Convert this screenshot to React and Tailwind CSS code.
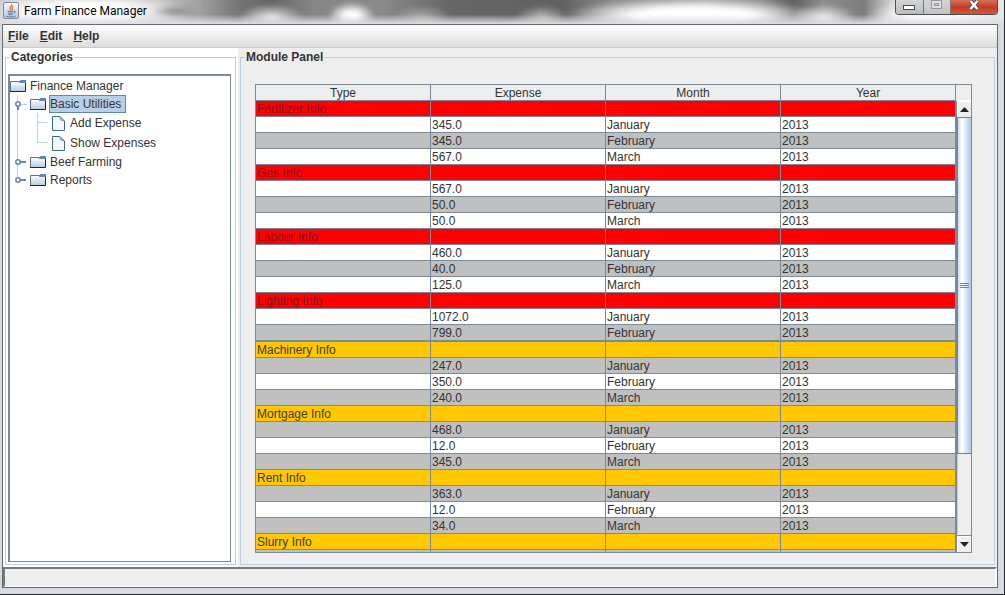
import React from "react";

const entries = [
  ["Fertilizer Info", "red", ["345.0", "345.0", "567.0"]],
  ["Gas Info", "red", ["567.0", "50.0", "50.0"]],
  ["Labour Info", "red", ["460.0", "40.0", "125.0"]],
  ["Lighting Info", "red", ["1072.0", "799.0"]],
  ["Machinery Info", "amber", ["247.0", "350.0", "240.0"]],
  ["Mortgage Info", "amber", ["468.0", "12.0", "345.0"]],
  ["Rent Info", "amber", ["363.0", "12.0", "34.0"]],
  ["Slurry Info", "amber", []],
];
const months = ["January", "February", "March"];

const rows = [];
entries.forEach(([name, tone, values]) => {
  rows.push({ type: name, tone, expense: "", month: "", year: "" });
  values.forEach((v, i) => rows.push({ type: "", expense: v, month: months[i], year: "2013" }));
});
rows.push({ type: "", expense: "", month: "", year: "" });

function rowClass(row, i) {
  if (row.tone === "red") return "bg-[#ff0000] text-[#801818]";
  if (row.tone === "amber") return "bg-[#ffc800] text-[#4a3a10]";
  return i % 2 === 0 ? "bg-[#c0c0c0]" : "bg-white";
}

function JavaIcon() {
  return (
    <svg width="16" height="17" viewBox="0 0 16 17" aria-hidden="true">
      <defs>
        <linearGradient id="java" x1="0" y1="0" x2="0" y2="1">
          <stop offset="0" stopColor="#fbfcfd" />
          <stop offset="1" stopColor="#b9c8d6" />
        </linearGradient>
      </defs>
      <rect x="0.5" y="0.5" width="15" height="16" rx="1.5" fill="url(#java)" stroke="#7b8a9a" />
      <path d="M8.500 2.300c1.400 1.600-2.600 2.600-1.500 4.200.4.6 1 1 .8 1.800M10.300 4.400c-1.700.8-1.600 1.600-.9 2.500.4.5.2 1-.2 1.400" fill="none" stroke="#e07a2c" strokeWidth="1.300" />
      <path d="M4.500 9.300h6.200M5 11h5M5.400 12.600h4.200M11 9.300c2-.6 2 1.600-.3 2M3.200 14.200c2.500 1 7 1 9.300-.1" fill="none" stroke="#55799e" />
    </svg>
  );
}

function Folder() {
  return (
    <svg className="shrink-0" width="17" height="14" viewBox="0 0 17 14" aria-hidden="true">
      <defs>
        <linearGradient id="folder" x1="0" y1="0" x2="0" y2="1">
          <stop offset="0" stopColor="#ffffff" />
          <stop offset="1" stopColor="#b3c9e0" />
        </linearGradient>
      </defs>
      <rect x="0.5" y="2.5" width="15" height="10" fill="url(#folder)" />
      <path d="M.5 12.500v-10h9l1.500 1" fill="none" stroke="#60728c" />
      <path d="M9 3.500 10.500 1H16v3H9z" fill="#6382bf" />
      <path d="M0 12.500h15.500V4" fill="none" stroke="#222831" />
    </svg>
  );
}

function Leaf() {
  return (
    <svg className="shrink-0" width="13" height="17" viewBox="0 0 13 17" aria-hidden="true">
      <path d="M.5 1.500h7.500l4.500 4.500v9.500H.5z" fill="#f4f8fc" stroke="#3f6793" />
      <path d="M7.500 1.500 8.500 5l3.500 1z" fill="#b8cfe5" stroke="#6489b0" strokeWidth="0.7" />
    </svg>
  );
}

function Branch({ kind }) {
  if (kind === "leaf" || kind === "lastLeaf") {
    return (
      <svg className="shrink-0" width="42" height="20" aria-hidden="true">
        <path d={kind === "leaf" ? "M7.5 0v20M27.5 0v20M28 9.5h9" : "M7.5 0v20M27.5 0v9.5h9.5"} fill="none" stroke="#b8cfe5" />
      </svg>
    );
  }
  return (
    <svg className="shrink-0" width="20" height="18" aria-hidden="true">
      <path d={kind === "last" ? "M7.5 0v9" : "M7.5 0v18"} stroke="#b8cfe5" />
      {kind === "open" ? (
        <>
          <path d="M11 9.5h6" stroke="#b8cfe5" />
          <path d="M8 10v5" stroke="#6382bf" strokeWidth="2" />
        </>
      ) : (
        <path d="M10 9h6" stroke="#6382bf" strokeWidth="2" />
      )}
      <circle cx="8" cy="9" r="2.2" fill="#fff" stroke="#6382bf" strokeWidth="1.5" />
    </svg>
  );
}

function TreeRow({ kind, label, selected }) {
  const leaf = kind === "leaf" || kind === "lastLeaf";
  return (
    <li className={leaf ? "flex h-5 items-center" : "flex h-[18px] items-center"}>
      {kind && <Branch kind={kind} />}
      {leaf ? <Leaf /> : <Folder />}
      <button
        className={
          selected
            ? "ml-0.5 h-[18px] border border-[#6382bf] bg-[#b8cfe5] pr-1 leading-4"
            : leaf
              ? "ml-1 border border-transparent leading-4"
              : "ml-0.5 border border-transparent leading-4"
        }
      >
        {label}
      </button>
    </li>
  );
}

function Panel({ title, className, children }) {
  return (
    <section className={className}>
      <fieldset className="flex min-h-0 min-w-0 flex-1 flex-col border border-[#b8cfe5]">
        <legend className="ml-1 px-px text-[12px] leading-4 font-bold">{title}</legend>
        {children}
      </fieldset>
    </section>
  );
}

function ArrowButton({ down }) {
  return (
    <button
      aria-label={down ? "Scroll down" : "Scroll up"}
      className="flex h-4 shrink-0 items-center justify-center border-t border-l border-white bg-[#eeeeee]"
    >
      <svg width="9" height="5" viewBox="0 0 9 5" aria-hidden="true">
        <path d={down ? "M0 0h9L5 4.5H4z" : "M0 5h9L5 .5H4z"} fill="#222" />
      </svg>
    </button>
  );
}

function TitleBar() {
  return (
    <header className="relative flex h-6 shrink-0 items-start overflow-hidden bg-[#c9cbcd]">
      <div className="absolute inset-0 bg-[linear-gradient(90deg,#c4c5c6_0%,#d5d5d5_4%,#d8d8d8_12%,#c0c0c0_16%,#a0a0a0_20%,#727272_24%,#666_27%,#858585_31%,#8a8a8a_38%,#666_45%,#606060_56%,#8c8c8c_61%,#a6a6a6_70%,#8c8c8c_76%,#606060_79%,#8e8e8e_82%,#7c7c7c_86%,#d8d8d8_89%,#e6e6e6_100%)]" />
      <div className="absolute inset-0 blur-[2px] bg-[radial-gradient(ellipse_34px_14px_at_27%_18px,#f4f4f4,transparent),radial-gradient(ellipse_24px_14px_at_35%_16px,white_30%,transparent),radial-gradient(ellipse_30px_13px_at_42%_18px,#b5acac,transparent),radial-gradient(ellipse_28px_13px_at_54%_18px,#c4bcba,transparent),radial-gradient(ellipse_130px_18px_at_69%_16px,white_45%,transparent),radial-gradient(ellipse_34px_14px_at_82%_18px,#f3f3f3,transparent),radial-gradient(ellipse_70px_20px_at_93%_18px,white_30%,transparent),radial-gradient(ellipse_24px_6px_at_17.5%_11px,#8a8a8a,transparent),radial-gradient(ellipse_110px_22px_at_8%_12px,white_40%,transparent)]" />
      <div className="absolute inset-0 bg-[linear-gradient(180deg,transparent_60%,#dde0e6_100%)]" />
      <div className="relative flex flex-1 items-center gap-[5px] pt-0.5 pl-[3px]">
        <JavaIcon />
        <h1 className="font-[Roboto,'Noto_Sans',sans-serif] text-[12px] leading-4 text-black">Farm Finance Manager</h1>
      </div>
      <div className="relative mr-1.5 flex h-[15px] overflow-hidden rounded-b-[4px] border border-t-0 border-[#4b4d50]">
        <button aria-label="Minimize" className="flex w-7 items-center justify-center border-r border-[#777] bg-linear-to-b from-[#d4d5d6] to-[#b9bbbd]">
          <svg width="13" height="5" aria-hidden="true"><rect x="0.5" y="0.5" width="11" height="4" fill="#fff" stroke="#454a58" /></svg>
        </button>
        <button aria-label="Maximize" className="flex w-[27px] items-start justify-center border-r border-[#777] bg-linear-to-b from-[#d2d3d4] to-[#c2c4c6]">
          <svg width="12" height="10" aria-hidden="true">
            <rect x="0.5" y="0.5" width="10" height="8" fill="#ddd" stroke="#96989b" />
            <rect x="3.5" y="3.5" width="4" height="2" fill="#ccc" stroke="#96989b" />
          </svg>
        </button>
        <button aria-label="Close" className="flex w-[46px] items-start justify-center bg-linear-to-b from-[#d9705c] via-[#c43b22] to-[#d05a38]">
          <svg width="12" height="11" viewBox="0 0 12 11" aria-hidden="true">
            <path d="M2.500 1 9.500 9M9.500 1 2.500 9" stroke="#4b4658" strokeWidth="4.500" />
            <path d="M2.500 1 9.500 9M9.500 1 2.500 9" stroke="#fff" strokeWidth="2.600" />
          </svg>
        </button>
      </div>
    </header>
  );
}

export default function App() {
  return (
    <div className="flex h-screen flex-col border-r border-b border-[#22252b] bg-[#d5dae3] font-['Liberation_Sans',Arial,sans-serif] text-[12px] text-[#333333]">
      <TitleBar />
      <div className="mr-[6px] mb-[6px] ml-[2px] flex min-h-0 flex-1 flex-col border border-[#66686c] bg-[#eeeeee]">
        <nav className="flex h-[23px] shrink-0 items-center gap-[11px] border-b border-[#cccccc] bg-linear-to-b from-white to-[#dddddd] px-[5px] font-bold">
          <button><u>F</u>ile</button>
          <button><u>E</u>dit</button>
          <button><u>H</u>elp</button>
        </nav>
        <main className="flex min-h-0 flex-1">
          <Panel title="Categories" className="flex w-[235px] shrink-0 bg-white px-0.5 pt-px pb-0.5">
            <div className="mr-1 mt-[9px] mb-0.5 ml-0.5 min-h-0 flex-1 border-t-2 border-r border-b border-l-2 border-[#7a8a99]">
              <ul className="pt-px">
                <TreeRow label="Finance Manager" />
                <TreeRow kind="open" label="Basic Utilities" selected />
                <TreeRow kind="leaf" label="Add Expense" />
                <TreeRow kind="lastLeaf" label="Show Expenses" />
                <TreeRow kind="closed" label="Beef Farming" />
                <TreeRow kind="last" label="Reports" />
              </ul>
            </div>
          </Panel>
          <Panel title="Module Panel" className="flex min-w-0 flex-1 px-0.5 pt-px pb-0.5">
            <div className="mt-[19px] mr-[22px] mb-[11px] ml-[14px] flex min-h-0 flex-1 border border-[#7a8a99]">
              <div className="min-w-0 flex-1 overflow-hidden">
                <table className="w-full table-fixed border-separate border-spacing-0">
                  <thead>
                    <tr>
                      {["Type", "Expense", "Month", "Year"].map((h) => (
                        <th key={h} className="h-4 border-r border-b border-[#7a8a99] p-0 pt-px text-center leading-[14px] font-normal">{h}</th>
                      ))}
                    </tr>
                  </thead>
                  <tbody>
                    {rows.map((row, i) => (
                      <tr key={i} className={rowClass(row, i)}>
                        {[row.type, row.expense, row.month, row.year].map((cell, c) => (
                          <td
                            key={c}
                            className={
                              row.type === "Machinery Info"
                                ? "h-[17px] border-t border-r border-b border-[#7a8a99] p-0 pt-px pl-px leading-[14px]"
                                : "h-4 border-r border-b border-[#7a8a99] p-0 pt-px pl-px leading-[14px]"
                            }
                          >
                            {cell}
                          </td>
                        ))}
                      </tr>
                    ))}
                  </tbody>
                </table>
              </div>
              <div className="flex w-[15px] shrink-0 flex-col">
                <div className="h-4 shrink-0 border-b border-white" />
                <div className="flex min-h-0 flex-1 flex-col border-l border-[#7a8a99]">
                  <ArrowButton />
                  <div className="flex min-h-0 flex-1 flex-col">
                    <div className="flex grow-[29] basis-0 items-center justify-center border border-r-0 border-[#6382bf] bg-linear-to-r from-[#c8dcef] via-[#ffffff] via-30% to-[#b0cae4]">
                      <svg width="9" height="6" aria-hidden="true">
                        <path d="M0 .5h9M0 2.5h9M0 4.5h9" stroke="#6382bf" />
                      </svg>
                    </div>
                    <div className="grow-[7] basis-0 border-b border-l border-b-[#7a8a99] border-l-[#b8cfe5]" />
                  </div>
                  <ArrowButton down />
                </div>
              </div>
            </div>
          </Panel>
        </main>
        <footer className="h-5 shrink-0 border-t-2 border-r-2 border-b border-l-2 border-t-[#77797c] border-r-white border-b-white border-l-[#77797c]" />
      </div>
    </div>
  );
}
